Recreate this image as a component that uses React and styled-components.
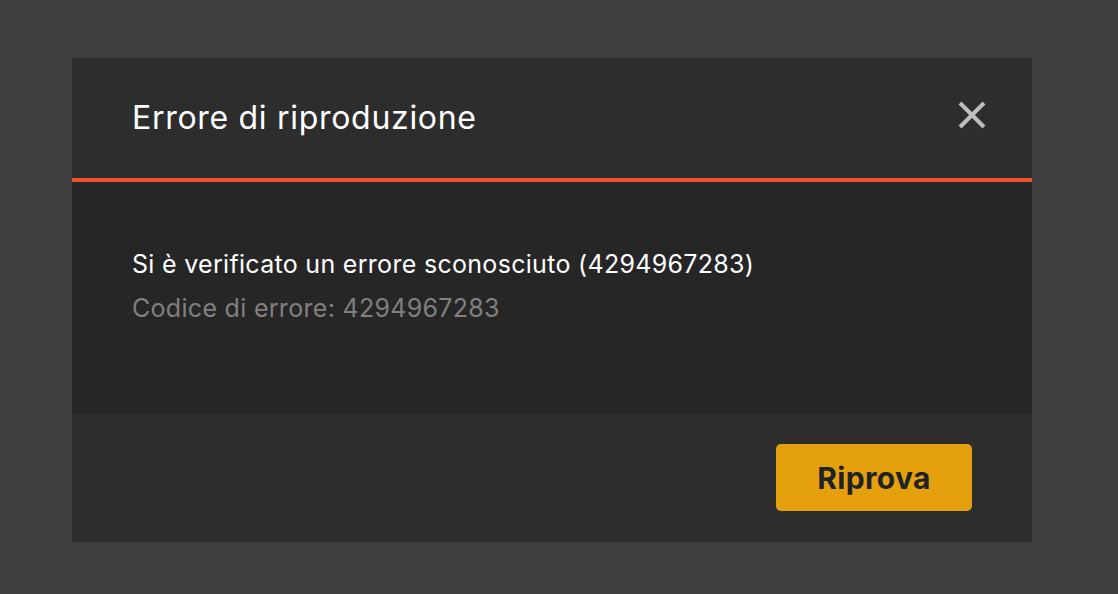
import styled, { createGlobalStyle } from "styled-components"

const Global = createGlobalStyle`
    html, body {
        margin: 0;
        padding: 0;
        background-color: #3f3f3f;
        font-family: Inter, "Open Sans", sans-serif;
    }
`

export default function App () {
    return (
        <>
            <Global />
            <Pagina>
                <Modal>
                    <Cabecalho>
                        <Titulo>Errore di riproduzione</Titulo>
                        <Fechar aria-label="Chiudi">
                            <svg width="28" height="28" viewBox="0 0 28 28">
                                <path d="M2 2 L26 26 M26 2 L2 26" stroke="#bdbdbd" strokeWidth="4" strokeLinecap="butt" />
                            </svg>
                        </Fechar>
                    </Cabecalho>

                    <Corpo>
                        <Mensagem>Si è verificato un errore sconosciuto (4294967283)</Mensagem>
                        <Codigo>Codice di errore: 4294967283</Codigo>
                    </Corpo>

                    <Rodape>
                        <Botao>Riprova</Botao>
                    </Rodape>
                </Modal>
            </Pagina>
        </>
    )
}

const Pagina = styled.div`
    width: 1118px;
    height: 594px;
    padding: 58px 0 0 72px;
    box-sizing: border-box;
    background-color: #3f3f3f;
`
const Modal = styled.div`
    width: 960px;
    display: flex;
    flex-direction: column;
`
const Cabecalho = styled.div`
    height: 120px;
    padding: 0 46px 0 60px;
    background-color: #2d2d2d;
    border-bottom: 4px solid #f2512d;
    display: flex;
    align-items: center;
    justify-content: space-between;
`
const Titulo = styled.div`
    font-size: 32px;
    letter-spacing: 0.7px;
    font-weight: 400;
    color: #ffffff;
    margin-top: -2px;
`
const Fechar = styled.button`
    width: 28px;
    height: 28px;
    padding: 0;
    border: none;
    background: none;
    display: flex;
    align-items: center;
    justify-content: center;
    cursor: pointer;
    margin-top: -6px;
`
const Corpo = styled.div`
    height: 232px;
    box-sizing: border-box;
    padding: 64px 60px 0 60px;
    background-color: #262626;
    display: flex;
    flex-direction: column;
    gap: 8px;
`
const Mensagem = styled.div`
    font-size: 25px;
    letter-spacing: 0.3px;
    line-height: 36px;
    color: #ffffff;
`
const Codigo = styled.div`
    font-size: 25px;
    letter-spacing: 0.3px;
    line-height: 36px;
    color: #808080;
`
const Rodape = styled.div`
    height: 128px;
    padding: 0 60px;
    background-color: #2d2d2d;
    display: flex;
    align-items: center;
    justify-content: flex-end;
`
const Botao = styled.button`
    width: 196px;
    height: 67px;
    margin-top: -1px;
    border: none;
    border-radius: 5px;
    background-color: #e5a00d;
    font-family: Inter, "Open Sans", sans-serif;
    font-size: 30px;
    font-weight: 700;
    letter-spacing: 0.3px;
    color: #1f2326;
    display: flex;
    align-items: center;
    justify-content: center;
    cursor: pointer;
`
